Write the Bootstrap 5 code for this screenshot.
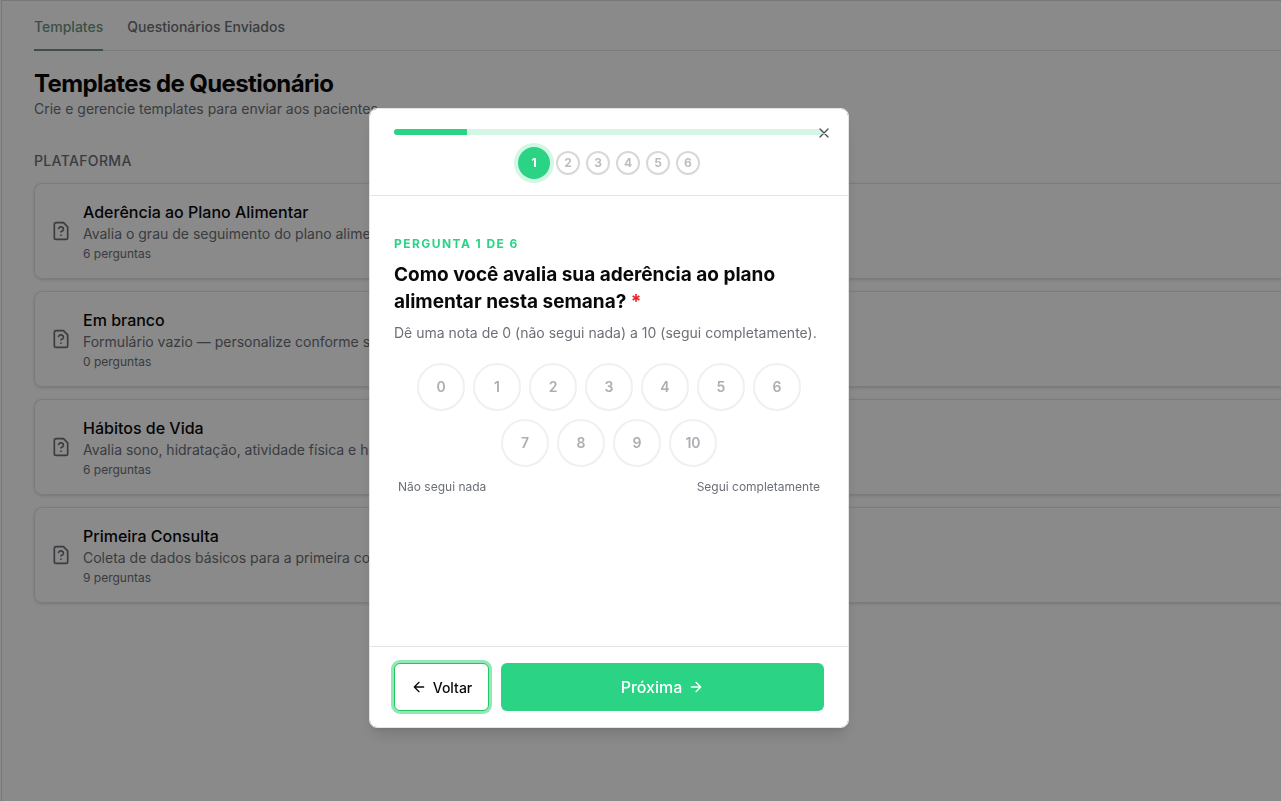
<!DOCTYPE html>
<html lang="pt-BR">
<head>
<meta charset="utf-8">
<meta name="viewport" content="width=device-width, initial-scale=1">
<title>Templates de Questionário</title>
<link href="https://cdn.jsdelivr.net/npm/bootstrap@5.3.0/dist/css/bootstrap.min.css" rel="stylesheet">
<style>
  :root { --brand: #2bd385; --brand-soft: #d4f6e5; --line: #e4e4e7; --muted-ink: #6b6f76; }
  body { font-family: Inter, "Liberation Sans", sans-serif; font-size: 14px; line-height: 20px; color: #09090b; background: #fff; overflow: hidden; }
  svg { fill: none; stroke: currentColor; stroke-width: 2; stroke-linecap: round; stroke-linejoin: round; flex: none; }
  .page-shell { min-height: 100vh; margin-left: 1px; padding: 0 0 32px 32px; border: solid #dcdcdf; border-width: 1px 0 0 1px; }
  .tab-row { gap: 24px; border-bottom: 1px solid var(--line); }
  .tab-row .nav-link { padding: 16px 0 12px; margin-bottom: -1px; border-bottom: 2px solid transparent; color: var(--muted-ink); font-weight: 500; }
  .tab-row .nav-link.active { color: #6f9482; border-bottom-color: #6f9482; }
  .page-title { margin: 18px 0 0; font-size: 24px; line-height: 30px; font-weight: 700; letter-spacing: -0.025em; }
  .soft-ink { color: var(--muted-ink); }
  .group-label { margin: 32px 0 12px; font-size: 14px; line-height: 20px; font-weight: 500; letter-spacing: 0.025em; color: var(--muted-ink); }
  .tpl-list { gap: 12px; }
  .tpl { border: 1px solid var(--line); border-right: 0; border-radius: 8px 0 0 8px; padding: 16px; gap: 12px; box-shadow: 0 1px 3px rgba(0,0,0,.14); }
  .tpl h3 { font-size: 16px; line-height: 24px; font-weight: 500; }
  .tpl .fine { margin-top: 2px; }
  .fine { font-size: 12px; line-height: 16px; }
  .modal-backdrop { --bs-backdrop-opacity: .46; }
  .modal { padding-right: 63px; }
  .modal-dialog { width: 480px; max-width: calc(100% - 16px); margin: 108px auto 0; }
  .modal-content { min-height: 620px; border: 1px solid var(--line); border-radius: 8px; color: inherit; box-shadow: 0 10px 15px -3px rgba(0,0,0,.12), 0 4px 6px -4px rgba(0,0,0,.12); }
  .modal-header { padding: 20px 24px 16px; border-color: var(--line); }
  .modal-body { padding: 38px 24px 24px; }
  .modal-footer { padding: 16px 24px; gap: 12px; border-color: var(--line); }
  .modal-footer > * { margin: 0; }
  .progress { height: 6px; border-radius: 3px; background: var(--brand-soft); --bs-progress-bar-bg: var(--brand); }
  .close-x { position: absolute; top: 16px; right: 16px; width: 16px; height: 16px; color: #515156; line-height: 0; }
  .steps { height: 32px; gap: 6px; margin-top: 12px; }
  .step { width: 24px; height: 24px; border: 2px solid #d8d8d8; border-radius: 50%; font-size: 12px; font-weight: 700; color: #bdbdc0; }
  .step.now { width: 32px; height: 32px; border: 0; color: #fff; background: var(--brand); box-shadow: 0 0 0 4px var(--brand-soft); }
  .kicker { font-size: 12px; font-weight: 700; letter-spacing: 0.12em; color: var(--brand); }
  .question { margin: 7px 0 8px; font-size: 19px; line-height: 27px; font-weight: 700; color: #09090b; }
  .required { color: #ef2020; }
  .hint { margin-bottom: 20px; }
  .grade { width: 48px; height: 48px; padding: 0; border: 2px solid #f0f0f0; border-radius: 50%; background: #fff; color: #adadb2; font-size: 14px; font-weight: 600; }
  .act { height: 48px; border-radius: 6px; font-weight: 500; }
  .act-back { width: 95px; padding: 0; gap: 6px; font-size: 14px; background: #fff; color: #09090b; border: 1px solid #22c55e; box-shadow: 0 0 0 3px #91e8b7; }
  .act-next { gap: 6px; font-size: 16px; background: var(--brand); color: #fff; border: 0; }
</style>
</head>
<body>
<svg class="d-none" aria-hidden="true">
  <symbol id="doc" viewBox="0 0 24 24"><path d="M15 2H6a2 2 0 0 0-2 2v16a2 2 0 0 0 2 2h12a2 2 0 0 0 2-2V7Z"/><path d="M9.1 9a3 3 0 0 1 5.82 1c0 2-3 3-3 3M12 17h.01"/></symbol>
</svg>
<main class="page-shell">
  <nav class="nav flex-nowrap tab-row">
    <a class="nav-link active" href="#">Templates</a>
    <a class="nav-link" href="#">Questionários Enviados</a>
  </nav>
  <h1 class="page-title">Templates de Questionário</h1>
  <p class="soft-ink mb-0">Crie e gerencie templates para enviar aos pacientes.</p>
  <h2 class="group-label">PLATAFORMA</h2>
  <div class="d-grid tpl-list">
    <article class="tpl d-flex align-items-center"><svg class="soft-ink" width="20" height="20"><use href="#doc"/></svg><div><h3 class="mb-0">Aderência ao Plano Alimentar</h3><div class="soft-ink">Avalia o grau de seguimento do plano alimentar</div><div class="soft-ink fine">6 perguntas</div></div></article>
    <article class="tpl d-flex align-items-center"><svg class="soft-ink" width="20" height="20"><use href="#doc"/></svg><div><h3 class="mb-0">Em branco</h3><div class="soft-ink">Formulário vazio — personalize conforme sua</div><div class="soft-ink fine">0 perguntas</div></div></article>
    <article class="tpl d-flex align-items-center"><svg class="soft-ink" width="20" height="20"><use href="#doc"/></svg><div><h3 class="mb-0">Hábitos de Vida</h3><div class="soft-ink">Avalia sono, hidratação, atividade física e hábitos</div><div class="soft-ink fine">6 perguntas</div></div></article>
    <article class="tpl d-flex align-items-center"><svg class="soft-ink" width="20" height="20"><use href="#doc"/></svg><div><h3 class="mb-0">Primeira Consulta</h3><div class="soft-ink">Coleta de dados básicos para a primeira consulta</div><div class="soft-ink fine">9 perguntas</div></div></article>
  </div>
</main>

<div class="modal-backdrop show"></div>
<div class="modal d-block" role="dialog" aria-modal="true" aria-labelledby="question">
  <div class="modal-dialog">
    <div class="modal-content">
      <header class="modal-header d-block">
        <div class="progress" role="progressbar" aria-label="Progresso" aria-valuenow="17" aria-valuemin="0" aria-valuemax="100"><div class="progress-bar" style="width:17%"></div></div>
        <button type="button" class="close-x btn p-0 border-0" aria-label="Fechar"><svg width="16" height="16" viewBox="0 0 24 24"><path d="M18 6 6 18M6 6l12 12"/></svg></button>
        <div class="steps d-flex justify-content-center align-items-center">
          <span class="step now d-flex justify-content-center align-items-center">1</span>
          <span class="step d-flex justify-content-center align-items-center">2</span>
          <span class="step d-flex justify-content-center align-items-center">3</span>
          <span class="step d-flex justify-content-center align-items-center">4</span>
          <span class="step d-flex justify-content-center align-items-center">5</span>
          <span class="step d-flex justify-content-center align-items-center">6</span>
        </div>
      </header>
      <div class="modal-body">
        <div class="kicker">PERGUNTA 1 DE 6</div>
        <h2 class="question" id="question">Como você avalia sua aderência ao plano alimentar nesta semana? <span class="required">*</span></h2>
        <p class="soft-ink hint">Dê uma nota de 0 (não segui nada) a 10 (segui completamente).</p>
        <div class="d-flex flex-wrap justify-content-center gap-2">
          <button type="button" class="grade">0</button><button type="button" class="grade">1</button><button type="button" class="grade">2</button><button type="button" class="grade">3</button><button type="button" class="grade">4</button><button type="button" class="grade">5</button><button type="button" class="grade">6</button><button type="button" class="grade">7</button><button type="button" class="grade">8</button><button type="button" class="grade">9</button><button type="button" class="grade">10</button>
        </div>
        <div class="d-flex justify-content-between soft-ink fine px-1 mt-2 pt-1"><span>Não segui nada</span><span>Segui completamente</span></div>
      </div>
      <footer class="modal-footer flex-nowrap">
        <button type="button" class="act act-back btn d-flex align-items-center justify-content-center"><svg width="16" height="16" viewBox="0 0 24 24"><path d="m12 19-7-7 7-7M19 12H5"/></svg>Voltar</button>
        <button type="button" class="act act-next btn flex-fill d-flex align-items-center justify-content-center">Próxima<svg width="16" height="16" viewBox="0 0 24 24"><path d="M5 12h14M12 5l7 7-7 7"/></svg></button>
      </footer>
    </div>
  </div>
</div>
<script src="https://cdn.jsdelivr.net/npm/bootstrap@5.3.0/dist/js/bootstrap.bundle.min.js"></script>
</body>
</html>
